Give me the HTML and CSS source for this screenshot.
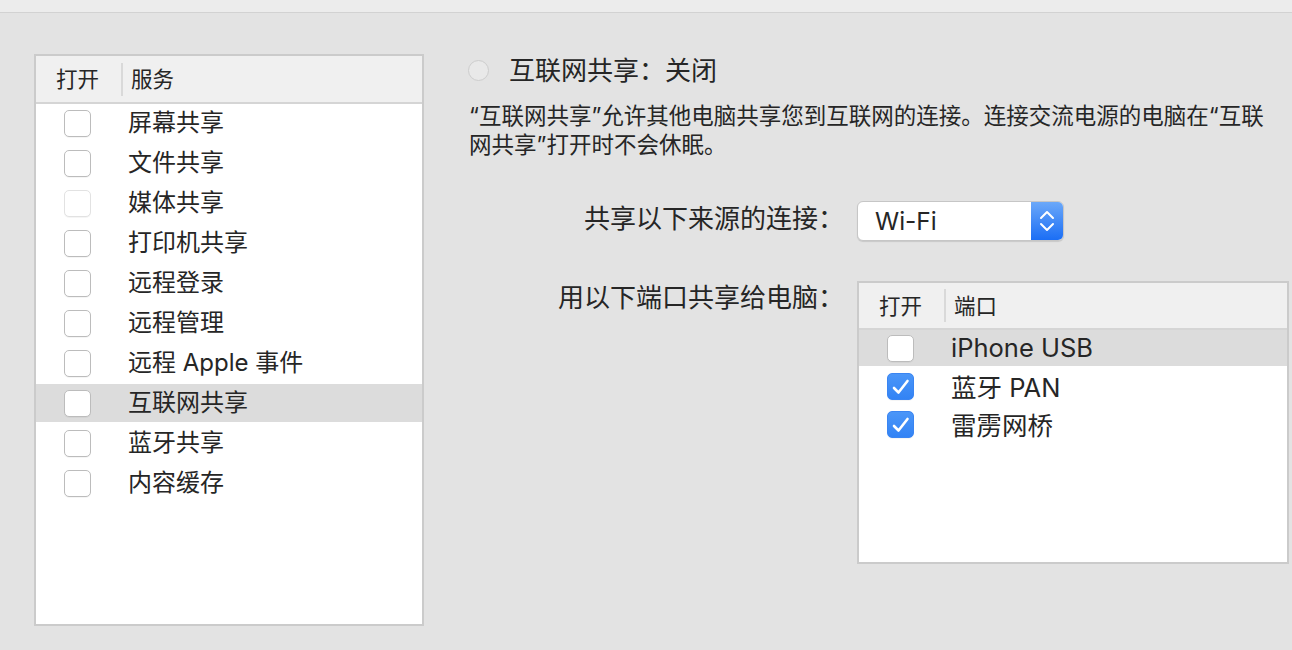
FILE: index.html
```html
<!DOCTYPE html>
<html lang="zh-CN">
<head>
  <meta charset="UTF-8" />
  <meta name="viewport" content="width=device-width, initial-scale=1" />
  <title>共享</title>
  <link rel="stylesheet" href="styles.css">
</head>
<body>

  <div class="topbar"></div>

  <div class="pane">

    <!-- Service list -->
    <div class="list services">
      <div class="thead">
        <span class="th-on">打开</span>
        <span class="th-sep"></span>
        <span class="th-name">服务</span>
      </div>
      <div class="rows">
        <div class="row"><span class="cb"></span><span class="name">屏幕共享</span></div>
        <div class="row"><span class="cb"></span><span class="name">文件共享</span></div>
        <div class="row"><span class="cb off"></span><span class="name">媒体共享</span></div>
        <div class="row"><span class="cb"></span><span class="name">打印机共享</span></div>
        <div class="row"><span class="cb"></span><span class="name">远程登录</span></div>
        <div class="row"><span class="cb"></span><span class="name">远程管理</span></div>
        <div class="row"><span class="cb"></span><span class="name">远程 Apple 事件</span></div>
        <div class="row selected"><span class="cb"></span><span class="name">互联网共享</span></div>
        <div class="row"><span class="cb"></span><span class="name">蓝牙共享</span></div>
        <div class="row"><span class="cb"></span><span class="name">内容缓存</span></div>
      </div>
    </div>

    <!-- Detail -->
    <div class="detail">
      <div class="status">
        <span class="radio"></span>
        <span class="status-title">互联网共享：关闭</span>
      </div>
      <p class="desc">“互联网共享”允许其他电脑共享您到互联网的连接。连接交流电源的电脑在“互联<br>网共享”打开时不会休眠。</p>

      <div class="field">
        <label>共享以下来源的连接：</label>
        <div class="popup">
          <span class="popup-value">Wi-Fi</span>
          <span class="popup-arrows">
            <svg width="32" height="38" viewBox="0 0 32 38">
              <path d="M10 16 L16 10 L22 16" fill="none" stroke="#fff" stroke-width="2" stroke-linecap="round" stroke-linejoin="round"/>
              <path d="M10 22 L16 28 L22 22" fill="none" stroke="#fff" stroke-width="2" stroke-linecap="round" stroke-linejoin="round"/>
            </svg>
          </span>
        </div>
      </div>

      <div class="field ports-field">
        <label>用以下端口共享给电脑：</label>
        <div class="list ports">
          <div class="thead">
            <span class="th-on">打开</span>
            <span class="th-sep"></span>
            <span class="th-name">端口</span>
          </div>
          <div class="rows">
            <div class="row selected"><span class="cb"></span><span class="name">iPhone USB</span></div>
            <div class="row"><span class="cb on"><svg width="26" height="26" viewBox="0 0 26 26"><path d="M6 14 L10.5 18.5 L19.5 7" fill="none" stroke="#fff" stroke-width="2.6" stroke-linecap="round" stroke-linejoin="round"/></svg></span><span class="name">蓝牙 PAN</span></div>
            <div class="row"><span class="cb on"><svg width="26" height="26" viewBox="0 0 26 26"><path d="M6 14 L10.5 18.5 L19.5 7" fill="none" stroke="#fff" stroke-width="2.6" stroke-linecap="round" stroke-linejoin="round"/></svg></span><span class="name">雷雳网桥</span></div>
          </div>
        </div>
      </div>
    </div>

  </div>

</body>
</html>
```

FILE: styles.css
```css
* {
  box-sizing: border-box;
}
body {
  margin: 0;
  height: 650px;
  overflow: hidden;
  background: #e3e3e3;
  color: #262626;
  font-family: "Inter", "Noto Sans CJK SC", sans-serif;
}
.topbar {
  height: 13px;
  background: #ececec;
  border-bottom: 1px solid #d2d2d2;
}
.pane {
  display: flex;
  padding: 41px 0 0 34px;
}

/* tables */
.list {
  background: #fff;
  border: 2px solid #cbcbcb;
}
.services {
  width: 390px;
  height: 572px;
  flex-shrink: 0;
}
.thead {
  display: flex;
  align-items: center;
  height: 48px;
  background: #f0f0f0;
  border-bottom: 2px solid #d5d5d5;
  font-size: 21.5px;
  padding: 0 0 3px 20px;
}
.th-sep {
  width: 2px;
  height: 33px;
  background: #d9d9d9;
  margin: 3px 8px 0 22px;
}
.rows {
  display: flex;
  flex-direction: column;
  gap: 2px;
}
.row {
  display: flex;
  align-items: center;
  height: 38px;
  padding-left: 28px;
  font-size: 24px;
}
.row.selected {
  background: #dcdcdc;
}
.row .name {
  margin-left: 37px;
  padding-bottom: 5px;
}

/* checkbox */
.cb {
  display: inline-block;
  width: 27px;
  height: 27px;
  flex-shrink: 0;
  background: #fff;
  border: 1px solid #bcbcbc;
  border-radius: 5px;
  box-shadow: 0 1px 0 rgba(0, 0, 0, 0.04);
}
.cb.off {
  border-color: #e2e2e2;
}
.cb.on {
  background: linear-gradient(#4b96f8, #3283f5);
  border-color: #3a85f2;
}
.cb svg {
  display: block;
}

/* detail */
.detail {
  margin-left: 44px;
  flex: 1;
}
.status {
  display: flex;
  align-items: center;
  height: 32px;
}
.radio {
  width: 21px;
  height: 21px;
  border-radius: 50%;
  background: #e9e9e9;
  border: 1px solid #cdcdcd;
}
.status-title {
  font-size: 26px;
  margin-left: 20px;
  padding-bottom: 4px;
}
.desc {
  margin: 15px 0 0 1px;
  font-size: 22.5px;
  line-height: 29px;
  white-space: nowrap;
}
.field {
  display: flex;
  align-items: center;
  margin-top: 42px;
}
.ports-field {
  align-items: flex-start;
  margin-top: 40px;
}
.field label {
  width: 376px;
  text-align: right;
  font-size: 26px;
  line-height: 34px;
  margin-right: 13px;
  padding-bottom: 4px;
}

/* popup button */
.popup {
  display: flex;
  width: 207px;
  height: 40px;
  background: #fff;
  border: 1px solid #c6c6c6;
  border-radius: 6px;
  box-shadow: 0 1px 1px rgba(0, 0, 0, 0.12);
  overflow: hidden;
}
.popup-value {
  flex: 1;
  padding-left: 17px;
  font-size: 24.5px;
  line-height: 38px;
}
.popup-arrows {
  width: 32px;
  background: linear-gradient(#6ba8f9, #1b6ef5);
}
.popup-arrows svg {
  display: block;
}

.ports {
  width: 432px;
  height: 283px;
}
.ports .thead {
  height: 47px;
}
.ports .row {
  height: 36px;
  font-size: 25.5px;
}
.ports .row .name {
  margin-left: 37px;
  padding-bottom: 2px;
}
```
